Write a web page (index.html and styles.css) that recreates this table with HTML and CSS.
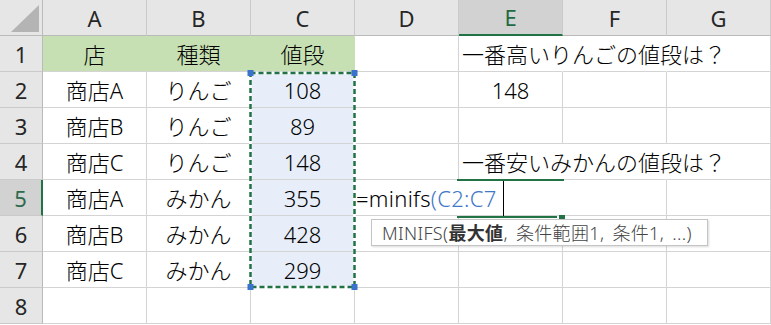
FILE: index.html
```html
<!DOCTYPE html>
<html lang="ja">
<head>
<meta charset="utf-8">
<title>MINIFS</title>
<link rel="stylesheet" href="styles.css">
</head>
<body>
<div class="wrap">
  <div class="sheet">
    <div class="hd corner"><svg class="tri" width="42" height="35" viewBox="0 0 42 35"><polygon points="11,32 39,32 39,5" fill="#b4b4b4"/></svg></div>
    <div class="hd col">A</div>
    <div class="hd col">B</div>
    <div class="hd col">C</div>
    <div class="hd col">D</div>
    <div class="hd col active-col">E</div>
    <div class="hd col">F</div>
    <div class="hd col">G</div>

    <div class="hd row">1</div>
    <div class="c green">店</div>
    <div class="c green">種類</div>
    <div class="c green">値段</div>
    <div class="c"></div>
    <div class="c left nob">一番高いりんごの値段は？</div>
    <div class="c nob"></div>
    <div class="c"></div>

    <div class="hd row">2</div>
    <div class="c">商店A</div>
    <div class="c">りんご</div>
    <div class="c sel">108</div>
    <div class="c"></div>
    <div class="c">148</div>
    <div class="c"></div>
    <div class="c"></div>

    <div class="hd row">3</div>
    <div class="c">商店B</div>
    <div class="c">りんご</div>
    <div class="c sel">89</div>
    <div class="c"></div>
    <div class="c"></div>
    <div class="c"></div>
    <div class="c"></div>

    <div class="hd row">4</div>
    <div class="c">商店C</div>
    <div class="c">りんご</div>
    <div class="c sel">148</div>
    <div class="c"></div>
    <div class="c left nob">一番安いみかんの値段は？</div>
    <div class="c nob"></div>
    <div class="c"></div>

    <div class="hd row active-row">5</div>
    <div class="c">商店A</div>
    <div class="c">みかん</div>
    <div class="c sel">355</div>
    <div class="c edit nob">=minifs<span class="ref">(C2:C7</span></div>
    <div class="c nob"></div>
    <div class="c"></div>
    <div class="c"></div>

    <div class="hd row">6</div>
    <div class="c">商店B</div>
    <div class="c">みかん</div>
    <div class="c sel">428</div>
    <div class="c"></div>
    <div class="c"></div>
    <div class="c"></div>
    <div class="c"></div>

    <div class="hd row">7</div>
    <div class="c">商店C</div>
    <div class="c">みかん</div>
    <div class="c sel">299</div>
    <div class="c"></div>
    <div class="c"></div>
    <div class="c"></div>
    <div class="c"></div>

    <div class="hd row">8</div>
    <div class="c"></div>
    <div class="c"></div>
    <div class="c"></div>
    <div class="c"></div>
    <div class="c"></div>
    <div class="c"></div>
    <div class="c"></div>
  </div>

  <svg class="ants" width="115" height="226" viewBox="0 0 115 226">
    <rect x="5.5" y="6" width="104" height="214" fill="none" stroke="#ffffff" stroke-width="2.5"/>
    <rect x="5.5" y="6" width="104" height="214" fill="none" stroke="#217346" stroke-width="2.5" stroke-dasharray="5 3"/>
    <rect x="2.5" y="3" width="6" height="6" fill="#3a72cc"/>
    <rect x="106.5" y="3" width="6" height="6" fill="#3a72cc"/>
    <rect x="2.5" y="217" width="6" height="6" fill="#3a72cc"/>
    <rect x="106.5" y="217" width="6" height="6" fill="#3a72cc"/>
  </svg>

  <div class="act-top"></div>
  <div class="act-bottom"></div>
  <div class="act-handle"></div>
  <div class="caret"></div>

  <div class="tip">MINIFS(<b>最大値</b>, 条件範囲1, 条件1, ...)</div>
</div>
</body>
</html>
```

FILE: styles.css
```css
html, body {
  margin: 0;
  padding: 0;
  background: #ffffff;
}

.wrap {
  position: relative;
  width: 771px;
  height: 325px;
  overflow: hidden;
  font-family: "Noto Sans", "Noto Sans CJK JP", sans-serif;
  font-weight: 300;
}

.sheet {
  display: grid;
  grid-template-columns: 43px repeat(7, 104px);
  grid-template-rows: repeat(9, 36px);
}

.sheet > div {
  box-sizing: border-box;
  display: flex;
  align-items: center;
  justify-content: center;
  white-space: nowrap;
  font-size: 22px;
  line-height: 1;
  min-width: 0;
}

.c {
  border-right: 1px solid #d4d4d4;
  border-bottom: 1px solid #d4d4d4;
  color: #000000;
}

.hd {
  background: #e6e6e6;
  color: #262626;
  font-weight: 400;
}

.corner {
  border-right: 1px solid #bababa;
  border-bottom: 1px solid #bababa;
  position: relative;
}

.tri {
  position: absolute;
  left: 0;
  top: 0;
}

.col {
  border-right: 1px solid #cacaca;
  border-bottom: 1px solid #bababa;
}

.row {
  border-right: 1px solid #bababa;
  border-bottom: 1px solid #cacaca;
}

.active-col {
  background: #d2d2d2;
  color: #1e6b40;
  border-bottom: 2px solid #217346;
}

.active-row {
  background: #d2d2d2;
  color: #2e6a4c;
  border-right: 2px solid #217346;
}

.green {
  background: #c6e0b4;
  border-right-color: #c6e0b4;
}

.sel {
  background: #e7eef9;
}

.sheet > .left {
  justify-content: flex-start;
  padding-left: 3px;
  overflow: visible;
}

.nob {
  border-right-color: transparent;
}

.sheet > .edit {
  justify-content: flex-start;
  padding-left: 1px;
  overflow: visible;
  letter-spacing: 0.3px;
}

.ref {
  color: #3f78c8;
}

.ants {
  position: absolute;
  left: 245px;
  top: 67px;
}

.act-top {
  position: absolute;
  left: 457px;
  top: 179px;
  width: 107px;
  height: 2px;
  background: #217346;
}

.act-bottom {
  position: absolute;
  left: 457px;
  top: 216px;
  width: 100px;
  height: 2px;
  background: #217346;
}

.act-handle {
  position: absolute;
  left: 559px;
  top: 215px;
  width: 6px;
  height: 4px;
  background: #217346;
}

.caret {
  position: absolute;
  left: 503px;
  top: 181px;
  width: 1px;
  height: 35px;
  background: #000000;
}

.tip {
  position: absolute;
  left: 371px;
  top: 219px;
  width: 337px;
  height: 27px;
  box-sizing: border-box;
  border: 1px solid #c4c4c4;
  background: #ffffff;
  box-shadow: 1px 1px 2px rgba(0, 0, 0, 0.15);
  display: flex;
  align-items: center;
  padding-left: 10px;
  font-size: 18px;
  line-height: 1;
  color: #444444;
  white-space: nowrap;
  letter-spacing: 0.35px;
  word-spacing: 3px;
}

.tip b {
  font-weight: 700;
  color: #333333;
}
```
